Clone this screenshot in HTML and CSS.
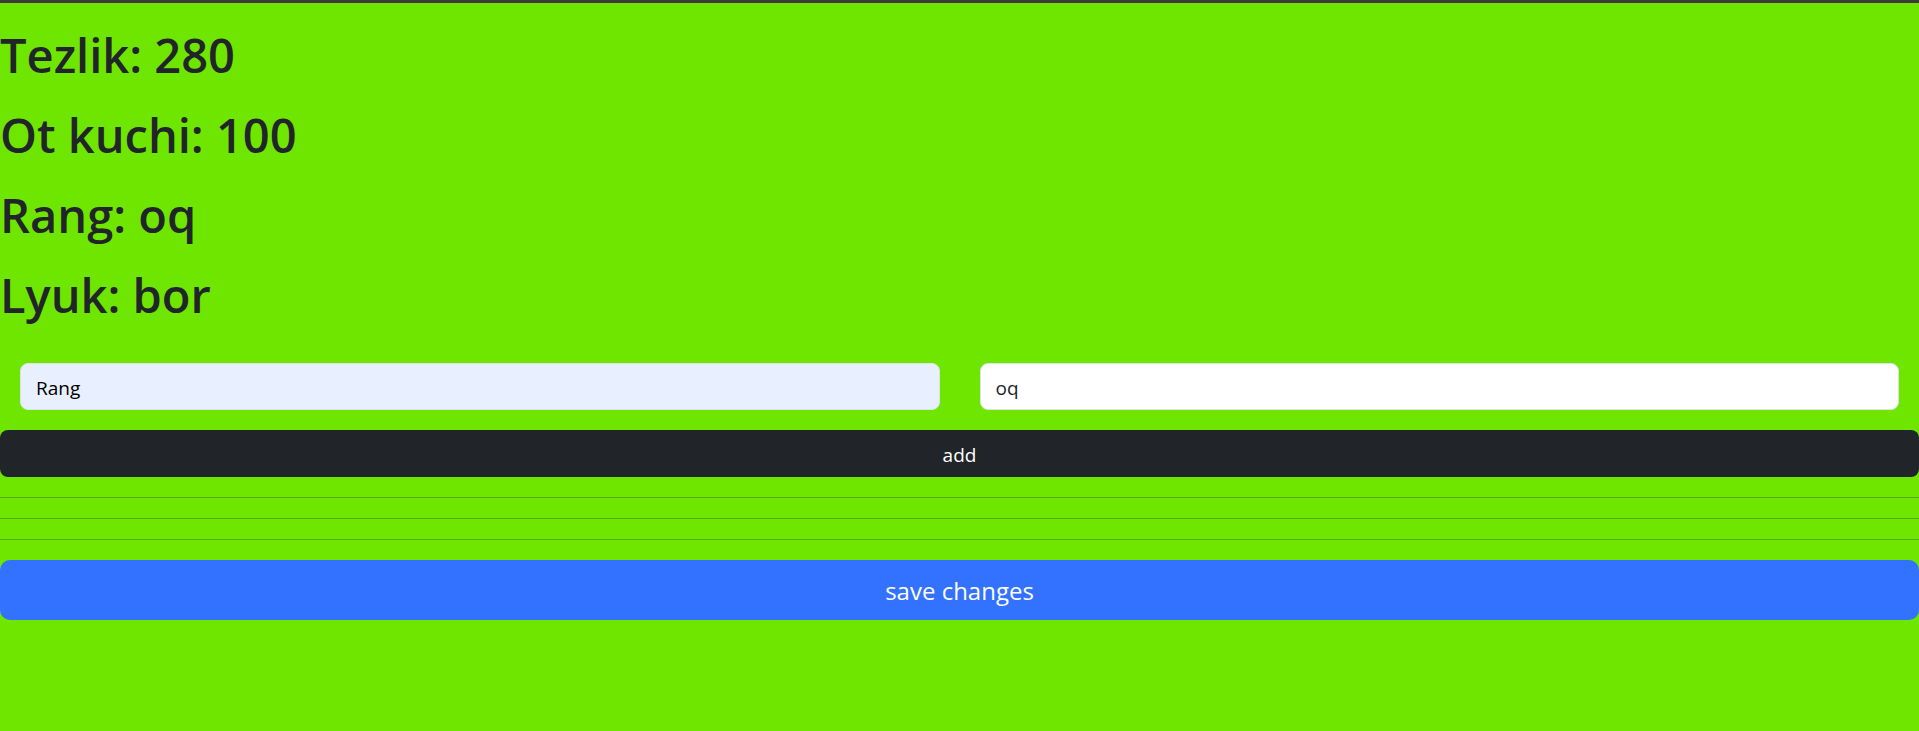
FILE: index.html
```html
<!DOCTYPE html>
<html lang="uz">
<head>
<meta charset="utf-8">
<title>Mashina</title>
<link rel="stylesheet" href="styles.css">
</head>
<body>
<main class="page">
  <section class="specs">
    <h1 class="spec">Tezlik: 280</h1>
    <h1 class="spec">Ot kuchi: 100</h1>
    <h1 class="spec">Rang: oq</h1>
    <h1 class="spec">Lyuk: bor</h1>
  </section>
  <form class="editor">
    <div class="fields">
      <input class="field field-filled" type="text" aria-label="key" value="Rang">
      <input class="field" type="text" aria-label="value" value="oq">
    </div>
    <button class="btn btn-dark" type="button">add</button>
    <hr class="rule">
    <hr class="rule">
    <hr class="rule">
    <button class="btn btn-save" type="button">save changes</button>
  </form>
</main>
</body>
</html>
```
FILE: styles.css
```css
* {
  box-sizing: border-box;
}

body {
  margin: 0;
  min-height: 100vh;
  border-top: 3px solid #3c3c3c;
  background: #6fe600;
  color: #212529;
  font-family: "Segoe UI", "Open Sans", "Noto Sans", sans-serif;
  font-size: 20px;
}

.specs {
  display: flex;
  flex-direction: column;
  gap: 20px;
  padding: 22px 0 18px;
}

.spec {
  margin: 0;
  font-size: 47px;
  font-weight: 600;
  line-height: 60px;
}

.editor {
  display: flex;
  flex-direction: column;
  gap: 20px;
}

.fields {
  display: grid;
  grid-template-columns: 1fr 1fr;
  gap: 40px;
  padding: 20px 20px 0;
}

.field {
  width: 100%;
  height: 47px;
  padding: 2px 15px 0;
  border: 1px solid #dee2e6;
  border-radius: 8px;
  background: #fff;
  color: #212529;
  font: inherit;
  font-size: 19px;
}

.field-filled {
  background: #e8f0ff;
  color: #000;
}

.btn {
  width: 100%;
  border: 0;
  color: #fff;
  font: inherit;
}

.btn-dark {
  height: 47px;
  padding: 2px 0 0;
  border-radius: 8px;
  background: #212529;
  font-size: 19px;
}

.btn-save {
  height: 60px;
  border-radius: 10px;
  background: #3371ff;
  font-size: 24px;
}

.rule {
  width: 100%;
  margin: 0;
  border: 0;
  border-top: 1px solid #212529;
  opacity: 0.3;
}
```
